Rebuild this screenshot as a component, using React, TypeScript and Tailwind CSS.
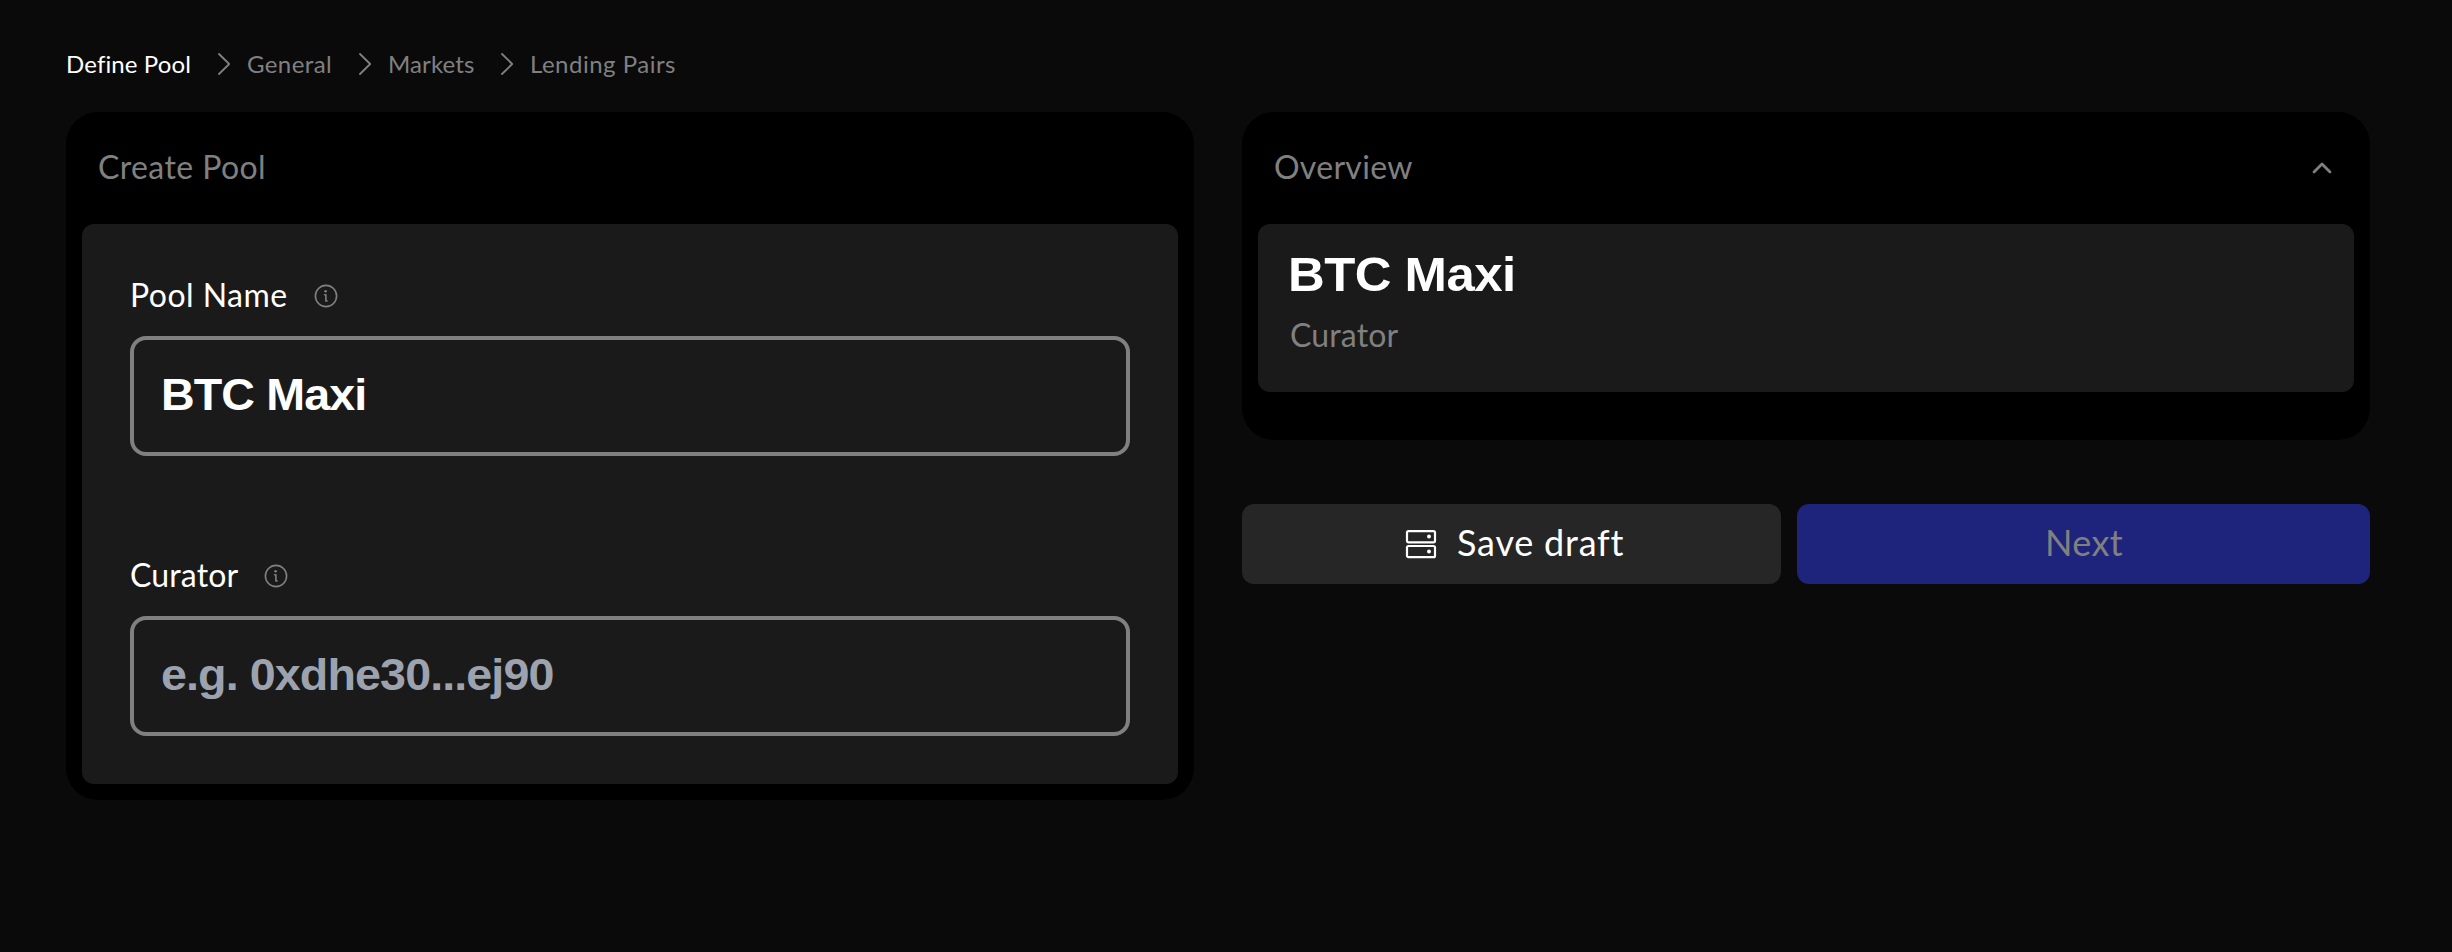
import { useState } from "react";

const sans = "font-['Lato','Open_Sans',sans-serif]";
const display = "font-['Liberation_Sans',Arial,sans-serif] font-bold origin-left scale-x-[1.06]";

function Separator({ className }: { className: string }) {
  return (
    <svg className={"h-6 w-3 shrink-0 " + className} viewBox="0 0 12 24" fill="none" stroke="#808080" strokeWidth="1.8" strokeLinecap="round" strokeLinejoin="round">
      <path d="M1 2 11.2 12 1 22" />
    </svg>
  );
}

function InfoIcon() {
  return (
    <svg className="h-6 w-6 shrink-0" viewBox="0 0 24 24" fill="none" stroke="#808080" strokeWidth="1.6" strokeLinecap="round" strokeLinejoin="round">
      <circle cx="12" cy="12" r="10.6" />
      <path d="M10.6 10.7h1.3v6.3h1.2" />
      <circle cx="11.6" cy="7.2" r="1.3" fill="#808080" stroke="none" />
    </svg>
  );
}

function StorageIcon() {
  return (
    <svg className="h-8 w-8 shrink-0" viewBox="0 0 32 32" fill="none" stroke="#fff" strokeWidth="2.2">
      <rect x="2" y="3.1" width="28" height="11.2" rx="1.5" />
      <rect x="2" y="18" width="28" height="11.2" rx="1.5" />
      <circle cx="24" cy="8.6" r="2" fill="#fff" stroke="none" />
      <circle cx="24" cy="23.6" r="2" fill="#fff" stroke="none" />
    </svg>
  );
}

function Field({ label, labelClass, value, placeholder, onChange }: { label: string; labelClass: string; value: string; placeholder?: string; onChange: (v: string) => void }) {
  return (
    <label className="flex flex-col gap-[21px]">
      <span className="flex h-10 items-start">
        <span className={"shrink-0 whitespace-nowrap text-[32px] leading-10 text-white " + labelClass}>{label}</span>
        <span className="pt-[9px]"><InfoIcon /></span>
      </span>
      <span className="flex h-[120px] rounded-2xl border-4 border-[#808080] pl-[27px]">
        <input
          className={display + " h-full w-[900px] bg-transparent pb-[2px] text-[44px] tracking-[-0.85px] text-white outline-none placeholder:text-[#9ca3af] placeholder:opacity-100"}
          value={value}
          placeholder={placeholder}
          onChange={(e) => onChange(e.target.value)}
        />
      </span>
    </label>
  );
}

export default function App() {
  const [name, setName] = useState("BTC Maxi");
  const [curator, setCurator] = useState("");
  const [open, setOpen] = useState(true);
  return (
    <div className={sans + " min-h-[952px] w-[2452px] bg-[#0a0a0a] px-[66px] pt-12"}>
      <nav className="flex h-16 items-start text-[24px] leading-8 text-[#808080]">
        <span className="w-[152px] whitespace-nowrap tracking-[0.12px] text-white">Define Pool</span>
        <Separator className="mt-1" />
        <span className="ml-[17px] w-[112px] whitespace-nowrap tracking-[0.4px]">General</span>
        <Separator className="mt-1" />
        <span className="ml-[17px] w-[113px] whitespace-nowrap tracking-[0.1px]">Markets</span>
        <Separator className="mt-1" />
        <span className="ml-[17px] whitespace-nowrap tracking-[0.5px]">Lending Pairs</span>
      </nav>

      <main className="flex items-start gap-12">
        <section className="w-[1128px] rounded-[32px] bg-black px-4 pb-4">
          <h2 className="h-28 pl-4 pt-[35px] text-[32px] leading-10 tracking-[0.4px] text-[#808080]">Create Pool</h2>
          <div className="flex flex-col gap-[99px] rounded-xl bg-[#1a1a1a] px-12 pb-12 pt-[51px]">
            <Field label="Pool Name" labelClass="w-[184px] tracking-[0.45px]" value={name} onChange={setName} />
            <Field label="Curator" labelClass="w-[134px] tracking-[0.15px]" value={curator} placeholder="e.g. 0xdhe30...ej90" onChange={setCurator} />
          </div>
        </section>

        <div className="flex w-[1128px] flex-col gap-16">
          <section className="rounded-[32px] bg-black px-4 pb-12">
            <header className="flex h-28 items-start justify-between pl-4 pr-[18px]">
              <h2 className="pt-[35px] text-[32px] leading-10 tracking-[0.3px] text-[#808080]">Overview</h2>
              <button className="mt-[42px]" onClick={() => setOpen(!open)} aria-label="Toggle overview">
                <svg className="h-7 w-7" viewBox="0 0 28 28" fill="none" stroke="#808080" strokeWidth="2.8" strokeLinecap="round" strokeLinejoin="round">
                  <path d="M6 18 14 10 22 18" />
                </svg>
              </button>
            </header>
            {open && (
              <div className="h-[168px] rounded-xl bg-[#1a1a1a] pl-[30px] pt-[23px]">
                <h3 className={display + " w-[900px] text-[48px] leading-[56px] tracking-[-0.5px] text-white"}>{name}</h3>
                <p className="mt-3 pl-0.5 text-[32px] leading-10 tracking-[0.15px] text-[#808080]">Curator</p>
              </div>
            )}
          </section>

          <div className="flex gap-4 text-[36px] leading-10">
            <button className="flex h-20 w-[539px] items-center rounded-xl bg-[#262626] pl-[163px] text-white">
              <StorageIcon />
              <span className="ml-5 whitespace-nowrap pb-1 tracking-[0.8px]">Save draft</span>
            </button>
            <button className="flex h-20 w-[573px] items-center rounded-xl bg-[#1e247c] pb-1 pl-[248px] tracking-[0.4px] text-[#808080]">Next</button>
          </div>
        </div>
      </main>
    </div>
  );
}
